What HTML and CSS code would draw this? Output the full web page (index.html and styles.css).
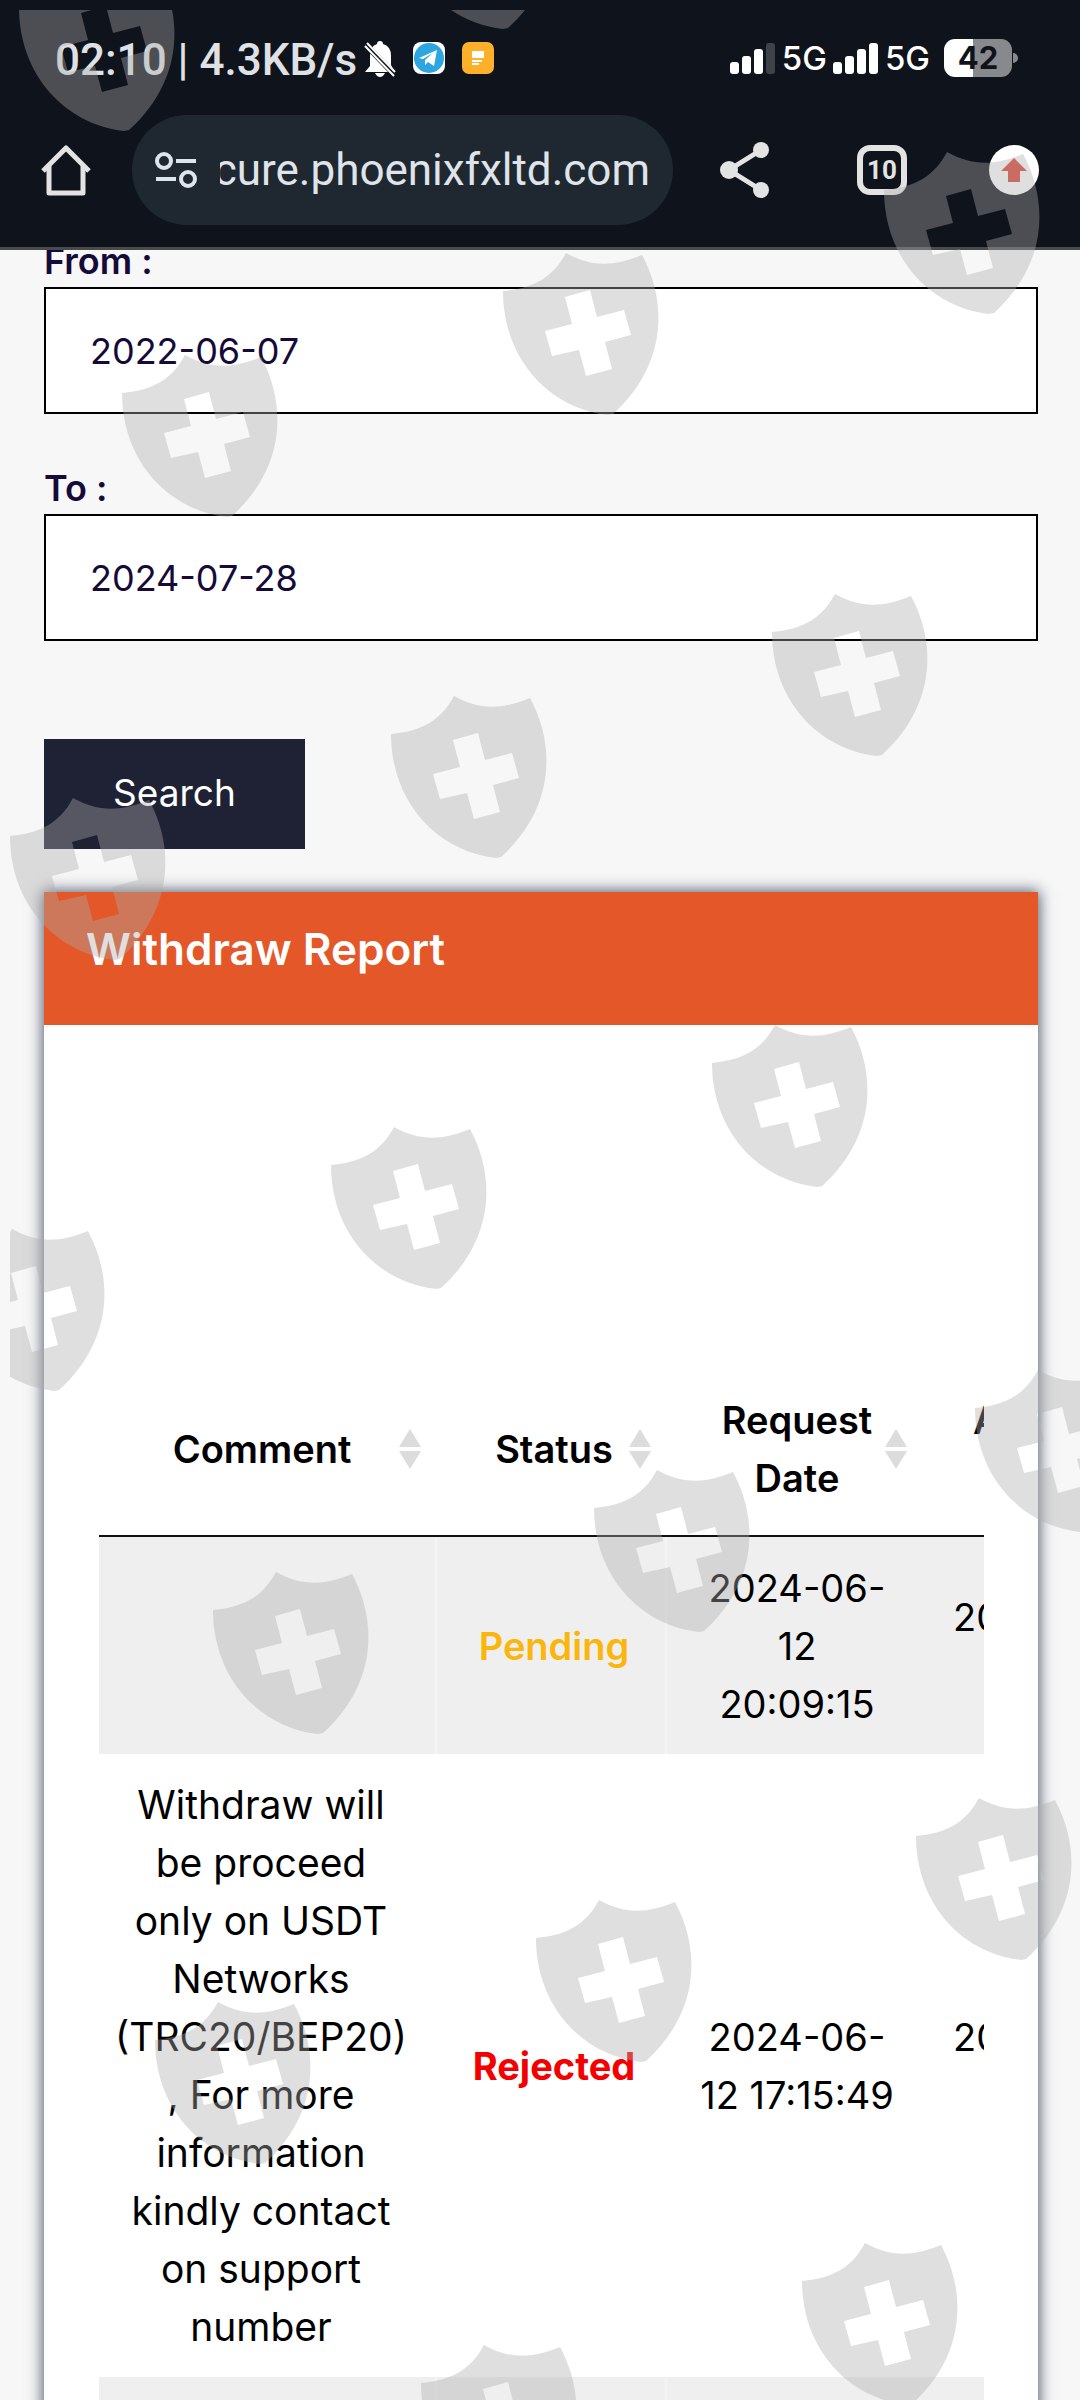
FILE: index.html
```html
<!DOCTYPE html>
<html lang="en">
<head>
  <meta charset="UTF-8" />
  <meta name="viewport" content="width=device-width, initial-scale=1" />
  <title>Withdraw Report</title>
  <link rel="stylesheet" href="styles.css">
</head>
<body>

  <header class="browser">
    <div class="status-bar">
      <span class="clock">02:10 | 4.3KB/s</span>
      <div class="notices">
        <svg width="32" height="38" viewBox="0 0 32 38">
          <path d="M1 33 L6 27 V17 Q6 7 13 5 Q13 2 16 2 Q19 2 19 5 Q27 7 27 17 V26 L31 33 Z M11 34 H21 Q19 38 16 38 Q13 38 11 34 Z" fill="#fff"/>
          <path d="M0 4 L31 36" stroke="#0f131b" stroke-width="6"/>
          <path d="M1 7 L30 37" stroke="#fff" stroke-width="2"/>
          <path d="M3 4 L31 33" stroke="#fff" stroke-width="2"/>
        </svg>
        <svg width="32" height="32" viewBox="0 0 32 32">
          <rect width="32" height="32" rx="8" fill="#fff"/>
          <circle cx="16" cy="16" r="15" fill="#2ca5e0"/>
          <path d="M6 16 L24 8 L21 24 L15 20 L12 23 L12 18 L20 11 L10 17 Z" fill="#fff"/>
        </svg>
        <svg width="32" height="32" viewBox="0 0 32 32">
          <rect width="32" height="32" rx="7" fill="#ffb02a"/>
          <path d="M10 9 H22 V16 H10 Z M10 18 H20 V20 H10 Z M10 21 H17 V23 H10 Z" fill="#fff"/>
        </svg>
      </div>
      <div class="network">
        <svg width="46" height="32" viewBox="0 0 46 32">
          <g fill="#fff"><rect y="20" width="9" height="12" rx="3"/><rect x="12" y="14" width="9" height="18" rx="3"/><rect x="24" y="7" width="9" height="25" rx="3"/></g>
          <rect x="36" y="1" width="9" height="31" rx="3" fill="#3f4249"/>
        </svg>
        <span class="net-label">5G</span>
        <svg width="46" height="32" viewBox="0 0 46 32">
          <g fill="#fff"><rect y="20" width="9" height="12" rx="3"/><rect x="12" y="14" width="9" height="18" rx="3"/><rect x="24" y="7" width="9" height="25" rx="3"/><rect x="36" y="1" width="9" height="31" rx="3"/></g>
        </svg>
        <span class="net-label">5G</span>
        <span class="battery">42</span>
      </div>
    </div>

    <nav class="toolbar">
      <button class="icon-button home" aria-label="Home">
        <svg width="50" height="52" viewBox="0 0 50 52" fill="none" stroke="#e3e3e3" stroke-width="5" stroke-linejoin="round">
          <path d="M2 27 L25 4 L48 27"/>
          <path d="M8 22 V49 H42 V22"/>
        </svg>
      </button>
      <div class="address">
        <svg width="42" height="36" viewBox="0 0 42 36" fill="none" stroke="#dfe3ea" stroke-width="4">
          <circle cx="9" cy="9" r="7"/><path d="M21 9 H41"/>
          <circle cx="33" cy="27" r="7"/><path d="M1 27 H21"/>
        </svg>
        <span class="url">cure.phoenixfxltd.com</span>
      </div>
      <button class="icon-button share" aria-label="Share">
        <svg width="50" height="56" viewBox="0 0 50 56">
          <path d="M41 8 L9 28 L41 48" fill="none" stroke="#e3e3e3" stroke-width="5"/>
          <g fill="#e3e3e3"><circle cx="41" cy="8" r="8"/><circle cx="9" cy="28" r="9"/><circle cx="41" cy="48" r="8"/></g>
        </svg>
      </button>
      <button class="tabs" aria-label="10 open tabs">10</button>
      <button class="icon-button" aria-label="Update">
        <svg width="50" height="50" viewBox="0 0 50 50">
          <circle cx="25" cy="25" r="25" fill="#fff"/>
          <path d="M25 13 L38 26 H31 V37 H19 V26 H12 Z" fill="#dd4437"/>
        </svg>
      </button>
    </nav>
  </header>

  <main class="content">
    <form class="filter">
      <div class="field">
        <label for="from">From :</label>
        <input type="text" id="from" value="2022-06-07">
      </div>
      <div class="field">
        <label for="to">To :</label>
        <input type="text" id="to" value="2024-07-28">
      </div>
      <button type="button" class="search-button">Search</button>
    </form>

    <section class="card">
      <h2 class="card-title">Withdraw Report</h2>
      <div class="card-body">
        <div class="table-scroll">
          <table class="report">
            <colgroup>
              <col class="col-comment"><col class="col-status"><col class="col-date"><col class="col-date">
            </colgroup>
            <thead>
              <tr>
                <th class="comment">Comment<svg class="sort" viewBox="0 0 22 40"><path d="M11 0 L22 18 H0 Z M0 22 H22 L11 40 Z"/></svg></th>
                <th>Status<svg class="sort" viewBox="0 0 22 40"><path d="M11 0 L22 18 H0 Z M0 22 H22 L11 40 Z"/></svg></th>
                <th>Request<br>Date<svg class="sort" viewBox="0 0 22 40"><path d="M11 0 L22 18 H0 Z M0 22 H22 L11 40 Z"/></svg></th>
                <th class="cut">A<br>&nbsp;</th>
              </tr>
            </thead>
            <tbody>
              <tr>
                <td class="comment"></td>
                <td class="pending">Pending</td>
                <td>2024-06-<br>12<br>20:09:15</td>
                <td class="cut">20<br>&nbsp;</td>
              </tr>
              <tr>
                <td class="comment">Withdraw will<br>be proceed<br>only on USDT<br>Networks<br>(TRC20/BEP20)<br>, For more<br>information<br>kindly contact<br>on support<br>number</td>
                <td class="rejected">Rejected</td>
                <td>2024-06-<br>12 17:15:49</td>
                <td class="cut">20<br>&nbsp;</td>
              </tr>
              <tr>
                <td class="comment">&nbsp;</td>
                <td></td>
                <td></td>
                <td></td>
              </tr>
            </tbody>
          </table>
        </div>
      </div>
    </section>
  </main>

  <!-- shield watermark over the whole screen -->
  <svg class="watermark" viewBox="0 0 1080 2400" preserveAspectRatio="xMinYMin" aria-hidden="true">
    <defs>
      <clipPath id="area"><rect x="10" y="10" width="1070" height="2390"/></clipPath>
      <path id="shield" fill-rule="evenodd" d="M0 38 C32 35 50 24 63 0 C88 14 110 14 139 2 C166 52 162 114 110 161 L105 162 C45 155 0 105 0 38 Z M62 44 L87 37 L94 64 L121 57 L128 82 L102 89 L109 116 L83 123 L76 97 L49 103 L42 78 L69 71 Z"/>
    </defs>
    <g clip-path="url(#area)">
      <use href="#shield" x="19" y="-31"/>
      <use href="#shield" x="398" y="-133"/>
      <use href="#shield" x="884" y="152"/>
      <use href="#shield" x="503" y="253"/>
      <use href="#shield" x="122" y="355"/>
      <use href="#shield" x="772" y="594"/>
      <use href="#shield" x="391" y="696"/>
      <use href="#shield" x="10" y="798"/>
      <use href="#shield" x="712" y="1025"/>
      <use href="#shield" x="331" y="1127"/>
      <use href="#shield" x="-51" y="1229"/>
      <use href="#shield" x="975" y="1370"/>
      <use href="#shield" x="594" y="1470"/>
      <use href="#shield" x="213" y="1572"/>
      <use href="#shield" x="916" y="1798"/>
      <use href="#shield" x="536" y="1900"/>
      <use href="#shield" x="155" y="2002"/>
      <use href="#shield" x="802" y="2243"/>
      <use href="#shield" x="421" y="2345"/>
    </g>
  </svg>

</body>
</html>
```
FILE: styles.css
```css
* {
  box-sizing: border-box;
}

body {
  font-family: Inter, sans-serif;
  font-size: 38px;
  line-height: 58px;
  background: #f7f7f7;
  color: #000;
  margin: 0;
  height: 100vh;
  overflow: hidden;
  display: flex;
  flex-direction: column;
}

button {
  font-family: inherit;
  border: none;
  padding: 0;
  flex-shrink: 0;
  cursor: pointer;
}

svg {
  display: block;
  flex-shrink: 0;
}

/* browser bars */

.browser {
  position: relative;
  z-index: 1;
  flex-shrink: 0;
  background: #0f131b;
  border-bottom: 3px solid #4a4a4a;
  font-family: Roboto, sans-serif;
}

.status-bar {
  display: flex;
  align-items: center;
  padding: 36px 68px 0 55px;
  height: 80px;
}

.clock {
  font-size: 44px;
  line-height: 44px;
  font-weight: 500;
  color: #dfe1e4;
  margin-top: 4px;
}

.notices {
  display: flex;
  align-items: center;
  gap: 17px;
  margin-left: 7px;
}

.network {
  display: flex;
  align-items: center;
  gap: 6px;
  margin-left: auto;
}

.net-label {
  font-family: Inter, sans-serif;
  font-size: 33px;
  line-height: 40px;
  font-weight: 500;
  color: #fff;
}

.battery {
  position: relative;
  margin-left: 8px;
  width: 68px;
  height: 38px;
  border-radius: 11px;
  background: linear-gradient(to right, #fff 42%, #87898d 42%);
  color: #0f131b;
  font-family: Inter, sans-serif;
  font-size: 31px;
  line-height: 38px;
  font-weight: 700;
  text-align: center;
}

.battery::after {
  content: "";
  position: absolute;
  left: 69px;
  top: 14px;
  width: 5px;
  height: 10px;
  border-radius: 0 5px 5px 0;
  background: #87898d;
}

.toolbar {
  display: flex;
  align-items: center;
  padding: 35px 41px 22px;
}

.icon-button {
  background: none;
}

.address {
  display: flex;
  align-items: center;
  gap: 23px;
  flex: 1;
  min-width: 0;
  height: 110px;
  margin: 0 47px 0 41px;
  padding: 0 23px;
  border-radius: 55px;
  background: #1f2830;
}

.url {
  display: flex;
  justify-content: flex-end;
  flex: 1;
  min-width: 0;
  overflow: hidden;
  white-space: nowrap;
  font-size: 44px;
  line-height: 56px;
  color: #dfe3ea;
}

.tabs {
  width: 50px;
  height: 50px;
  margin: 0 82px 0 87px;
  border: 6px solid #e3e3e3;
  border-radius: 13px;
  background: none;
  color: #e3e3e3;
  font-size: 26px;
  line-height: 38px;
  font-weight: 700;
}

/* page */

.content {
  flex: 1;
  display: flex;
  flex-direction: column;
  margin-top: -10px;
  padding: 0 42px 0 44px;
}

.field {
  display: flex;
  flex-direction: column;
  margin-bottom: 53px;
}

.field label {
  font-size: 36px;
  line-height: 42px;
  font-weight: 600;
  color: #150a38;
  margin-bottom: 5px;
}

.field input {
  width: 100%;
  height: 127px;
  padding: 0 44px;
  border: 2px solid #000;
  background: #fff;
  color: #150a38;
  font-family: inherit;
  font-size: 36px;
}

.search-button {
  display: block;
  height: 110px;
  margin: 98px 0 43px;
  padding: 0 69px 4px;
  background: #1f2235;
  color: #fff;
  font-size: 37px;
}

.card {
  flex: 1;
  background: #fff;
  box-shadow: 0 0 14px 1px #4a5468;
}

.card-title {
  margin: 0;
  padding: 32px 42px 51px;
  background: #e35728;
  color: #fff;
  font-size: 44px;
  line-height: 50px;
  font-weight: 600;
}

.card-body {
  padding: 338px 54px 0 55px;
}

.table-scroll {
  overflow: hidden;
}

.report {
  table-layout: fixed;
  width: 1080px;
  border-collapse: separate;
  border-spacing: 0;
  text-align: center;
}

.col-comment {
  width: 338px;
}

.col-status {
  width: 230px;
}

.col-date {
  width: 256px;
}

.report th {
  position: relative;
  padding: 28px 16px 28px 20px;
  border-bottom: 2px solid #111;
  font-weight: 600;
}

.report td {
  padding: 22px 16px 21px 22px;
  border-right: 2px solid #f4f4f4;
}

.report tbody tr:nth-child(odd) {
  background: #efefef;
}

.report tbody tr:nth-child(even) td {
  border-color: #fff;
}

.report tbody td:nth-child(3) {
  border-color: transparent;
}

.report .comment {
  padding-left: 12px;
  padding-right: 24px;
}

.report td.comment {
  font-size: 39px;
}

.report .pending {
  color: #fbb60d;
  font-weight: 600;
}

.report .rejected {
  color: #f30000;
  font-weight: 700;
}

.report .cut {
  text-align: left;
  padding-left: 30px;
}

.report th.cut {
  padding-left: 50px;
}

.sort {
  position: absolute;
  right: 16px;
  top: 66px;
  width: 22px;
  height: 40px;
  fill: #dcdcdc;
}

.watermark {
  position: fixed;
  top: 0;
  left: 0;
  z-index: 2;
  width: 100%;
  fill: #adadad;
  opacity: 0.39;
  pointer-events: none;
}
```
